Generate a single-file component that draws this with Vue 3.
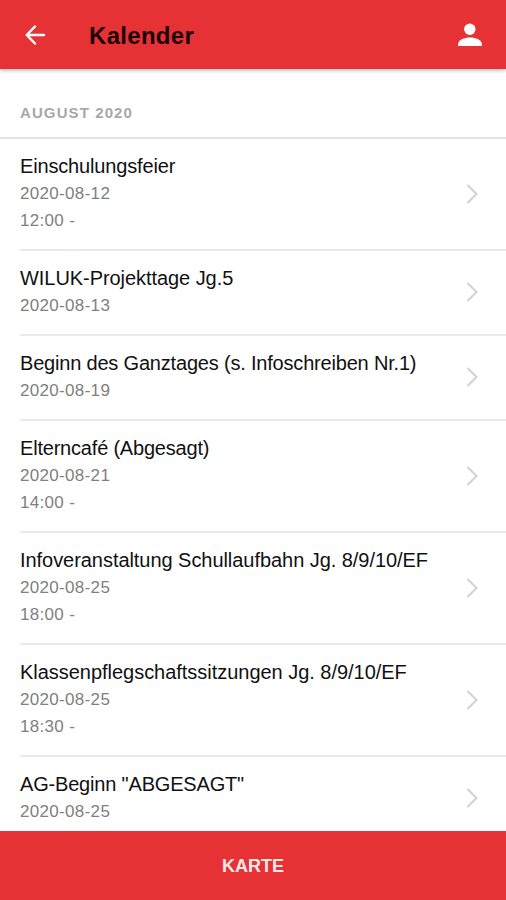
<script setup>
const events = [
  { id: 1, title: 'Einschulungsfeier', date: '2020-08-12', time: '12:00 -', tracking: -0.16 },
  { id: 2, title: 'WILUK-Projekttage Jg.5', date: '2020-08-13', tracking: -0.06 },
  { id: 3, title: 'Beginn des Ganztages (s. Infoschreiben Nr.1)', date: '2020-08-19', tracking: -0.19 },
  { id: 4, title: 'Elterncafé (Abgesagt)', date: '2020-08-21', time: '14:00 -', tracking: -0.2 },
  { id: 5, title: 'Infoveranstaltung Schullaufbahn Jg. 8/9/10/EF', date: '2020-08-25', time: '18:00 -', tracking: -0.05 },
  { id: 6, title: 'Klassenpflegschaftssitzungen Jg. 8/9/10/EF', date: '2020-08-25', time: '18:30 -', tracking: -0.03 },
  { id: 7, title: 'AG-Beginn "ABGESAGT"', date: '2020-08-25', tracking: -0.18 },
];
</script>

<template>
  <div class="app">
    <header class="toolbar">
      <button class="icon-btn" aria-label="Zurück">
        <svg width="22" height="22" viewBox="0 0 22 22">
          <path
            d="M20 11H3M11 2.500L2.700 11l8.300 8.500"
            fill="none"
            stroke="#fff"
            stroke-width="2.500"
            stroke-linecap="round"
            stroke-linejoin="round"
          />
        </svg>
      </button>
      <h1>Kalender</h1>
      <button class="icon-btn" aria-label="Profil">
        <svg width="24" height="24" viewBox="0 0 24 24">
          <circle cx="11.800" cy="6.300" r="5.700" fill="#fff" />
          <path d="M0 23v-1.500C0 17 6.500 14.500 12 14.500S24 17 24 21.500V23z" fill="#fff" />
        </svg>
      </button>
    </header>

    <main class="content">
      <h2>AUGUST 2020</h2>
      <ul class="events">
        <li v-for="event in events" :key="event.id" class="event">
          <div class="event-text">
            <h3 :style="{ letterSpacing: event.tracking + 'px' }">{{ event.title }}</h3>
            <p>{{ event.date }}</p>
            <p v-if="event.time">{{ event.time }}</p>
          </div>
          <svg class="chevron" width="12" height="20" viewBox="0 0 12 20">
            <path d="M1.500 1L10.500 10l-9 9" fill="none" stroke="#d4d4d4" stroke-width="2.200" />
          </svg>
        </li>
      </ul>
    </main>

    <button class="map-btn">KARTE</button>
  </div>
</template>

<style>
body {
  margin: 0;
}
</style>

<style scoped>
.app {
  display: flex;
  flex-direction: column;
  height: 900px;
  overflow: hidden;
  background: #fff;
  font-family: "Liberation Sans", Arial, sans-serif;
}
.toolbar {
  z-index: 1;
  display: flex;
  align-items: center;
  flex: 0 0 69px;
  box-sizing: border-box;
  padding: 0 24px;
  background: #e63235;
  box-shadow: 0 1px 4px rgba(0, 0, 0, 0.35);
}
.icon-btn {
  display: flex;
  padding: 0;
  border: 0;
  background: none;
}
h1 {
  flex: 1;
  margin: 2px 0 0 43px;
  font-size: 24px;
  line-height: 30px;
  letter-spacing: 0.3px;
  color: #1b0506;
}
.content {
  flex: 1;
  min-height: 0;
  overflow: hidden;
}
h2 {
  box-sizing: border-box;
  height: 70px;
  margin: 0;
  padding: 34px 20px 0;
  border-bottom: 2px solid #e5e5e5;
  font-size: 15px;
  line-height: 20px;
  letter-spacing: 1.1px;
  color: #a8a8a8;
}
.events {
  margin: 0;
  padding: 0;
  list-style: none;
}
.event {
  display: flex;
  align-items: center;
  justify-content: space-between;
  margin-left: 20px;
  padding: 14px 28px 15px 0;
  border-bottom: 2px solid #ebebeb;
}
h3 {
  margin: 0;
  font-size: 20px;
  font-weight: normal;
  line-height: 27px;
  color: #111;
}
p {
  margin: 0;
  font-size: 17px;
  line-height: 27px;
  letter-spacing: 0.32px;
  color: #808080;
}
.map-btn {
  flex: 0 0 69px;
  padding: 2px 0 0;
  border: 0;
  background: #e63235;
  color: #fbe9e9;
  font: bold 18px "Liberation Sans", Arial, sans-serif;
}
</style>
